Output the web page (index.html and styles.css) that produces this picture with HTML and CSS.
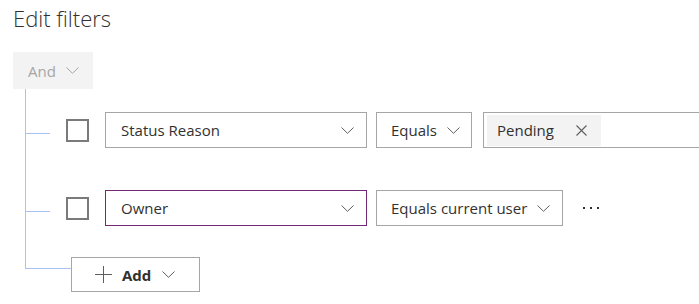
FILE: index.html
```html
<!DOCTYPE html>
<html>
<head>
<meta charset="utf-8">
<link rel="stylesheet" href="styles.css">
</head>
<body>
<div class="page">
  <h1 class="title">Edit filters</h1>
  <div class="and-btn">
    <span>And</span>
    <svg class="chev" width="13" height="7" viewBox="0 0 13 7"><polyline points="0.5,0.5 6.5,6.3 12.5,0.5" fill="none" stroke="#a6a6a6" stroke-width="1"/></svg>
  </div>
  <div class="tree">
    <div class="branch">
      <div class="row">
        <div class="connector"></div>
        <div class="checkbox"></div>
        <div class="select field">
          <span>Status Reason</span>
          <svg class="chev" width="13" height="7" viewBox="0 0 13 7"><polyline points="0.5,0.5 6.5,6.3 12.5,0.5" fill="none" stroke="#605e5c" stroke-width="1"/></svg>
        </div>
        <div class="select op op-equals">
          <span>Equals</span>
          <svg class="chev" width="13" height="7" viewBox="0 0 13 7"><polyline points="0.5,0.5 6.5,6.3 12.5,0.5" fill="none" stroke="#605e5c" stroke-width="1"/></svg>
        </div>
        <div class="value">
          <div class="tag">
            <span>Pending</span>
            <svg class="x" width="11" height="11" viewBox="0 0 11 11"><path d="M0.5 0.5 L10.5 10.5 M10.5 0.5 L0.5 10.5" stroke="#605e5c" stroke-width="1.1" fill="none"/></svg>
          </div>
        </div>
      </div>
      <div class="row">
        <div class="connector"></div>
        <div class="checkbox"></div>
        <div class="select field active">
          <span>Owner</span>
          <svg class="chev" width="13" height="7" viewBox="0 0 13 7"><polyline points="0.5,0.5 6.5,6.3 12.5,0.5" fill="none" stroke="#605e5c" stroke-width="1"/></svg>
        </div>
        <div class="select op op-current">
          <span>Equals current user</span>
          <svg class="chev" width="13" height="7" viewBox="0 0 13 7"><polyline points="0.5,0.5 6.5,6.3 12.5,0.5" fill="none" stroke="#605e5c" stroke-width="1"/></svg>
        </div>
        <div class="more">
          <svg width="18" height="3" viewBox="0 0 18 3"><rect x="0" y="0" width="2" height="2" fill="#323130"/><rect x="7" y="0" width="2" height="2" fill="#323130"/><rect x="14" y="0" width="2" height="2" fill="#323130"/></svg>
        </div>
      </div>
    </div>
    <div class="last">
      <div class="elbow"></div>
      <div class="add-btn">
        <svg class="plus" width="17" height="17" viewBox="0 0 17 17"><path d="M8.5 0 V17 M0 8.5 H17" stroke="#605e5c" stroke-width="1" fill="none"/></svg>
        <span>Add</span>
        <svg class="chev" width="13" height="7" viewBox="0 0 13 7"><polyline points="0.5,0.5 6.5,6.3 12.5,0.5" fill="none" stroke="#605e5c" stroke-width="1"/></svg>
      </div>
    </div>
  </div>
</div>
</body>
</html>
```
FILE: styles.css
```css
* { box-sizing: border-box; }
html, body { margin: 0; padding: 0; background: #fff; }
body {
  font-family: "Open Sans", "Noto Sans", sans-serif;
  color: #323130;
  overflow: hidden;
}
.page { padding-left: 13px; }
.title {
  margin: 0;
  padding-top: 2px;
  font-size: 22px;
  line-height: 32px;
  font-weight: 300;
  color: #323130;
}
.and-btn {
  margin-top: 18px;
  width: 80px;
  height: 37px;
  background: #f3f3f3;
  display: flex;
  align-items: center;
  padding-left: 15px;
  font-size: 15px;
  color: #a6a6a6;
}
.and-btn .chev { margin-left: 10px; }
.tree { margin-left: 12px; }
.branch {
  border-left: 1px solid #a8c2f4;
  padding-top: 23px;
  padding-bottom: 31px;
  display: flex;
  flex-direction: column;
  gap: 42px;
}
.row {
  display: flex;
  align-items: center;
  height: 36px;
}
.row > * { flex-shrink: 0; }
.connector {
  align-self: flex-start;
  margin-top: 21px;
  width: 24px;
  height: 1px;
  background: #a8c2f4;
}
.checkbox {
  margin-left: 16px;
  width: 23px;
  height: 23px;
  border: 2px solid #7a7a7a;
  background: #fff;
}
.select {
  height: 36px;
  border: 1px solid #a6a6a6;
  display: flex;
  align-items: center;
  justify-content: space-between;
  font-size: 15px;
  color: #323130;
  background: #fff;
}
.field {
  margin-left: 16px;
  width: 262px;
  padding: 0 12px 0 15px;
}
.field.active { border-color: #742774; }
.op { margin-left: 9px; padding: 0 11px 0 14px; }
.op-equals { width: 96px; }
.op-current { width: 187px; padding-right: 12px; }
.value {
  margin-left: 11px;
  width: 240px;
  height: 36px;
  border: 1px solid #a6a6a6;
  display: flex;
  align-items: center;
  padding-left: 3px;
}
.tag {
  height: 31px;
  width: 114px;
  background: #f3f3f3;
  display: flex;
  align-items: center;
  justify-content: space-between;
  padding: 0 14px 0 10px;
  font-size: 15px;
  color: #323130;
}
.more {
  margin-left: 20px;
  display: flex;
  align-items: center;
  padding-top: 1px;
}
.last { display: flex; align-items: flex-start; }
.elbow {
  width: 46px;
  height: 12px;
  border-left: 1px solid #a8c2f4;
  border-bottom: 1px solid #a8c2f4;
}
.add-btn {
  width: 129px;
  height: 35px;
  border: 1px solid #a6a6a6;
  display: flex;
  align-items: center;
  padding-left: 23px;
  font-size: 15px;
  font-weight: 700;
  color: #323130;
}
.add-btn .plus { margin-right: 10px; }
.add-btn .chev { margin-left: 11px; }
```
